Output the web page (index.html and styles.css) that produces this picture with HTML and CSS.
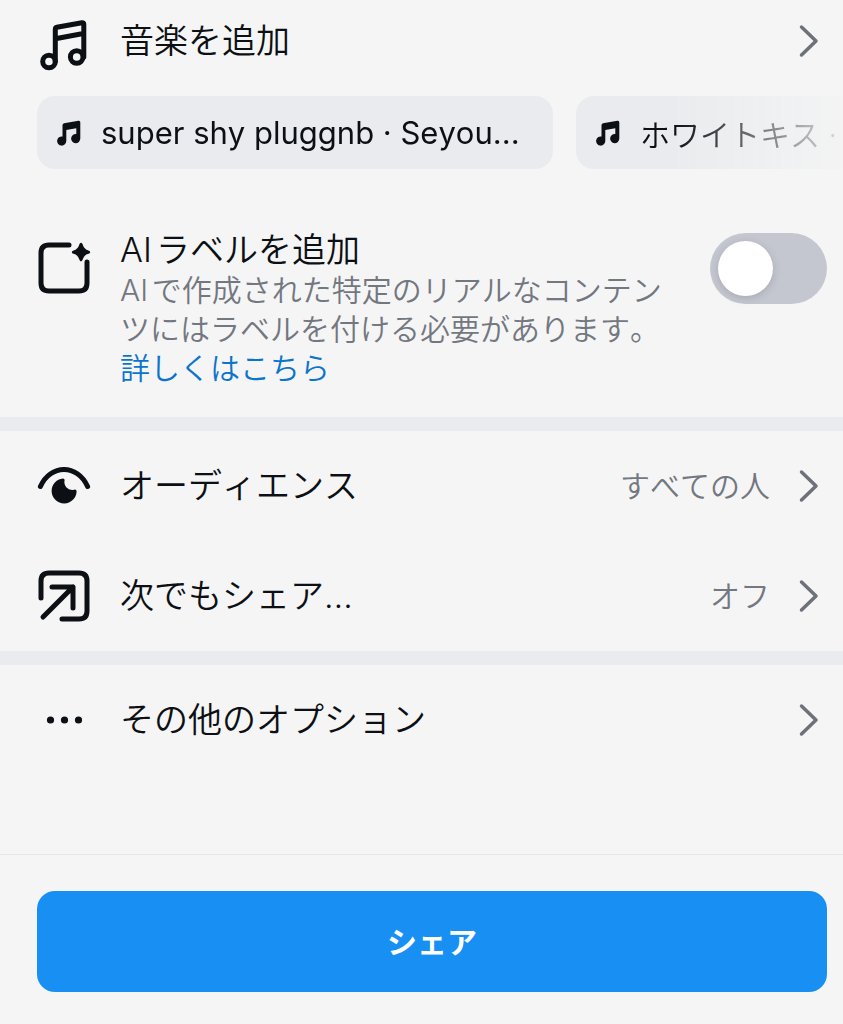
FILE: index.html
```
<!DOCTYPE html>
<html lang="ja">
<head>
    <meta charset="UTF-8">
    <meta name="viewport" content="width=device-width, initial-scale=1.0">
    <title>シェア</title>
    <link rel="stylesheet" href="styles.css">
</head>
<body>
    <main class="options">
        <section class="music">
            <button type="button" class="row row-music">
                <svg class="icon" viewBox="0 0 52 52" aria-hidden="true">
                    <g class="line">
                        <circle cx="11" cy="46.500" r="6.300"/>
                        <circle cx="38.700" cy="42" r="6.300"/>
                        <path d="M17.300 46.500V14.200q0-1.600 1.600-1.900L43.900 7.800q1.900-.3 1.900 1.500V42M17.300 23.700l28-5.200"/>
                    </g>
                </svg>
                <span class="title">音楽を追加</span>
                <svg class="chevron" viewBox="0 0 20 34" aria-hidden="true"><path d="M2.500 3l14.500 14L2.500 31"/></svg>
            </button>
            <div class="chips">
                <button type="button" class="chip">
                    <svg class="note" viewBox="0 0 24 26" aria-hidden="true">
                        <path d="M5.500 5.200q0-1.600 1.600-1.900L21.400.8q1.900-.3 1.900 1.500V18.600a4.600 4.600 0 1 1-4-4.600V8.200L9.300 10V21a4.600 4.600 0 1 1-3.800-4.500z"/>
                    </svg>
                    <span>super shy pluggnb · Seyou...</span>
                </button>
                <button type="button" class="chip chip-ja">
                    <svg class="note" viewBox="0 0 24 26" aria-hidden="true">
                        <path d="M5.500 5.200q0-1.600 1.600-1.900L21.400.8q1.900-.3 1.900 1.500V18.600a4.600 4.600 0 1 1-4-4.600V8.200L9.300 10V21a4.600 4.600 0 1 1-3.800-4.500z"/>
                    </svg>
                    <span>ホワイトキス ·</span>
                </button>
            </div>
        </section>

        <section class="ai">
            <svg class="icon" viewBox="0 0 52 52" aria-hidden="true">
                <path class="line" d="M31 3H11Q3 3 3 11V41Q3 49 11 49H41Q49 49 49 41V20"/>
                <path class="solid" d="M43 .8q1.200 0 1.700 1.800 1.300 4.700 5.800 6 1.700.6 1.700 1.600t-1.700 1.600q-4.500 1.200-5.800 5.800-.5 1.800-1.700 1.800t-1.700-1.800q-1.300-4.600-5.800-5.800-1.700-.6-1.700-1.600t1.700-1.600q4.500-1.300 5.800-6Q41.800.8 43 .8z"/>
            </svg>
            <div class="ai-text">
                <label class="title" for="ai-label">AIラベルを追加</label>
                <p class="desc">AIで作成された特定のリアルなコンテンツにはラベルを付ける必要があります。<br><a href="#">詳しくはこちら</a></p>
            </div>
            <input type="checkbox" role="switch" id="ai-label" class="switch">
        </section>

        <section class="group">
            <button type="button" class="row">
                <svg class="icon" viewBox="0 0 52 52" aria-hidden="true">
                    <path class="line" d="M2.400 26.500C12.500 3.800 39.500 3.800 49.600 26.500"/>
                    <path class="solid" d="M25 18.500q1.600 0 1.600 1.600-.9 4 1.600 7.200 3.100 3.300 7.800 2.400 2.600-.5 2.600 1.500a12.500 12.500 0 1 1-13.600-12.700z"/>
                </svg>
                <span class="title">オーディエンス</span>
                <span class="value">すべての人</span>
                <svg class="chevron" viewBox="0 0 20 34" aria-hidden="true"><path d="M2.500 3l14.500 14L2.500 31"/></svg>
            </button>
            <button type="button" class="row">
                <svg class="icon" viewBox="0 0 52 52" aria-hidden="true">
                    <path class="line" d="M3 28V11Q3 3 11 3H41Q49 3 49 11V41Q49 49 41 49H24M14 17H35V38M35 17L5 47"/>
                </svg>
                <span class="title">次でもシェア…</span>
                <span class="value">オフ</span>
                <svg class="chevron" viewBox="0 0 20 34" aria-hidden="true"><path d="M2.500 3l14.500 14L2.500 31"/></svg>
            </button>
        </section>

        <section class="group">
            <button type="button" class="row">
                <svg class="icon" viewBox="0 0 52 52" aria-hidden="true">
                    <g class="solid">
                        <circle cx="12.500" cy="26" r="3.600"/>
                        <circle cx="26.500" cy="26" r="3.600"/>
                        <circle cx="40.500" cy="26" r="3.600"/>
                    </g>
                </svg>
                <span class="title">その他のオプション</span>
                <svg class="chevron" viewBox="0 0 20 34" aria-hidden="true"><path d="M2.500 3l14.500 14L2.500 31"/></svg>
            </button>
        </section>
    </main>

    <footer class="footer">
        <button type="button" class="share">シェア</button>
    </footer>
</body>
</html>
```
FILE: styles.css
```
* {
    box-sizing: border-box;
}

body {
    display: flex;
    flex-direction: column;
    min-height: 100vh;
    margin: 0;
    background: #f5f5f5;
    color: #0c1014;
    font-family: Inter, "Noto Sans CJK JP", sans-serif;
    font-weight: 350;
    font-kerning: none;
    text-autospace: normal;
}

button {
    border: none;
    background: none;
    color: inherit;
    font-family: inherit;
    font-weight: inherit;
    font-kerning: inherit;
    cursor: pointer;
}

.options {
    flex: 1;
}

/* Rows */
.row {
    display: flex;
    align-items: center;
    width: 100%;
    height: 110px;
    padding: 0 24px 0 38px;
    text-align: left;
}

.row-music {
    height: 82px;
}

.icon {
    flex: none;
    width: 52px;
    height: 52px;
    margin-right: 30px;
    overflow: visible;
}

.line {
    fill: none;
    stroke: #0c1014;
    stroke-width: 5;
    stroke-linecap: round;
    stroke-linejoin: round;
}

.solid {
    fill: #0c1014;
}

.title {
    flex: 1;
    font-size: 34px;
    line-height: 42px;
}

.value {
    color: #737780;
    font-size: 30px;
    line-height: 40px;
    margin-right: 29px;
}

.chevron {
    flex: none;
    width: 20px;
    height: 34px;
    fill: none;
    stroke: #6d717a;
    stroke-width: 3.5;
    stroke-linecap: round;
    stroke-linejoin: round;
}

/* Suggested songs */
.chips {
    display: flex;
    gap: 23px;
    margin-top: 14px;
    padding-left: 37px;
    overflow: hidden;
    /* fade out at the right edge */
    mask-image: linear-gradient(to right, #000 calc(100% - 170px), transparent calc(100% + 20px));
}

.chip {
    display: flex;
    flex: none;
    align-items: center;
    gap: 20px;
    width: 516px;
    height: 73px;
    padding: 0 20px;
    border-radius: 18px;
    background: #e9ebee;
    font-size: 31px;
    font-weight: 400;
    white-space: nowrap;
}

.chip-ja {
    font-size: 30px;
    font-weight: 350;
}

.note {
    flex: none;
    width: 24px;
    height: 26px;
    fill: #0c1014;
}

/* AI label */
.ai {
    display: flex;
    align-items: flex-start;
    padding: 60px 16px 29px 38px;
}

.ai .icon {
    margin-top: 13px;
}

.ai-text {
    flex: 1;
}

.ai-text .title {
    display: block;
}

.desc {
    max-width: 560px;
    margin: 0;
    color: #737780;
    font-size: 30px;
    line-height: 39px;
}

.desc a {
    color: #0b74cc;
    text-decoration: none;
}

.switch {
    appearance: none;
    flex: none;
    width: 117px;
    height: 71px;
    margin: 4px 0 0;
    padding: 8px;
    border-radius: 36px;
    background: #c4c7d0;
    cursor: pointer;
}

.switch::before {
    content: "";
    display: block;
    width: 55px;
    height: 55px;
    border-radius: 50%;
    background: #fff;
    box-shadow: 0 2px 8px rgba(0, 0, 0, 0.15);
}

.switch:checked {
    background: #1890f3;
}

.switch:checked::before {
    margin-left: auto;
}

.group {
    border-top: 14px solid #e9ebee;
}

/* Share button */
.footer {
    padding: 36px 16px 32px 37px;
    border-top: 1px solid #e6e7e9;
}

.share {
    width: 100%;
    height: 101px;
    padding: 0 0 4px;
    border-radius: 18px;
    background: #1890f3;
    color: #fff;
    font-size: 30px;
    font-weight: 700;
}
```
